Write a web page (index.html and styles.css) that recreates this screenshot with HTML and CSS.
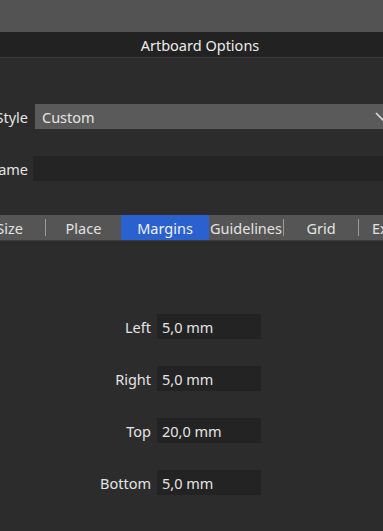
FILE: index.html
```html
<!DOCTYPE html>
<html>
<head>
<meta charset="utf-8">
<link rel="stylesheet" href="styles.css">
</head>
<body>
<div class="topbar"></div>
<div class="titlebar">Artboard Options</div>
<div class="content">
  <div class="form">
    <div class="row">
      <div class="label">Style</div>
      <div class="select">
        <span>Custom</span>
        <svg class="chev" width="18" height="10" viewBox="0 0 18 10"><polyline points="1,1 9,9 17,1" fill="none" stroke="#d8d8d8" stroke-width="1.6"/></svg>
      </div>
    </div>
    <div class="row">
      <div class="label">Name</div>
      <div class="input"></div>
    </div>
  </div>
  <div class="tabs">
    <div class="tab t-size">Size</div>
    <div class="sep"></div>
    <div class="tab t-place">Place</div>
    <div class="tab t-margins active">Margins</div>
    <div class="tab t-guides">Guidelines</div>
    <div class="sep"></div>
    <div class="tab t-grid">Grid</div>
    <div class="sep"></div>
    <div class="tab t-export">Export</div>
  </div>
  <div class="fields">
    <div class="frow"><div class="flabel">Left</div><div class="fval">5,0 mm</div></div>
    <div class="frow"><div class="flabel">Right</div><div class="fval">5,0 mm</div></div>
    <div class="frow"><div class="flabel">Top</div><div class="fval">20,0 mm</div></div>
    <div class="frow"><div class="flabel">Bottom</div><div class="fval">5,0 mm</div></div>
  </div>
</div>
</body>
</html>
```
FILE: styles.css
```css
html, body {
  margin: 0;
  padding: 0;
  background: #2c2c2c;
  overflow: hidden;
  width: 383px;
  height: 531px;
}
body {
  font-family: "Noto Sans", "Open Sans", sans-serif;
  font-size: 14.5px;
  color: #e4e4e4;
}
.topbar {
  height: 32px;
  background: #535353;
}
.titlebar {
  height: 25px;
  background: #222222;
  border-bottom: 1px solid #3a3a3a;
  display: flex;
  align-items: center;
  justify-content: center;
  padding-left: 17px;
  color: #ececec;
  font-size: 14.5px;
}
.content {
  padding-top: 46px;
}
.form {
  display: flex;
  flex-direction: column;
  gap: 27px;
}
.row {
  display: flex;
  height: 25px;
  align-items: center;
}
.label {
  width: 28px;
  flex: none;
  display: flex;
  justify-content: flex-end;
  white-space: nowrap;
}
.select {
  margin-left: 7px;
  flex: 1;
  height: 25px;
  background: #5a5a5a;
  display: flex;
  align-items: center;
  padding-left: 7px;
  position: relative;
  min-width: 360px;
}
.chev {
  position: absolute;
  left: 340px;
  top: 8px;
}
.input {
  margin-left: 5px;
  flex: 1;
  height: 25px;
  background: #242424;
  min-width: 360px;
}
.tabs {
  margin-top: 34px;
  height: 25px;
  background: #555555;
  display: flex;
  align-items: center;
  border-bottom: 1px solid #3a3a3a;
}
.tab {
  flex: none;
  height: 25px;
  display: flex;
  align-items: center;
  justify-content: center;
  color: #e2e2e2;
  white-space: nowrap;
}
.t-size { justify-content: flex-end; padding-right: 22px; margin-left: -22px; box-sizing: border-box; width: 67px; }
.t-place { width: 75px; }
.t-margins { width: 88px; }
.t-guides { width: 74px; }
.t-grid { width: 74px; }
.t-export { width: 60px; justify-content: flex-start; padding-left: 13px; }
.active {
  background: #2b60cf;
  color: #eef2fc;
}
.sep {
  flex: none;
  width: 1px;
  height: 17px;
  background: #9a9a9a;
}
.fields {
  margin-top: 73px;
  display: flex;
  flex-direction: column;
  gap: 27px;
}
.frow {
  display: flex;
  height: 25px;
  align-items: center;
}
.flabel {
  width: 151px;
  text-align: right;
  flex: none;
}
.fval {
  margin-left: 6px;
  width: 99px;
  height: 25px;
  background: #232323;
  display: flex;
  align-items: center;
  padding-left: 5px;
}
```
